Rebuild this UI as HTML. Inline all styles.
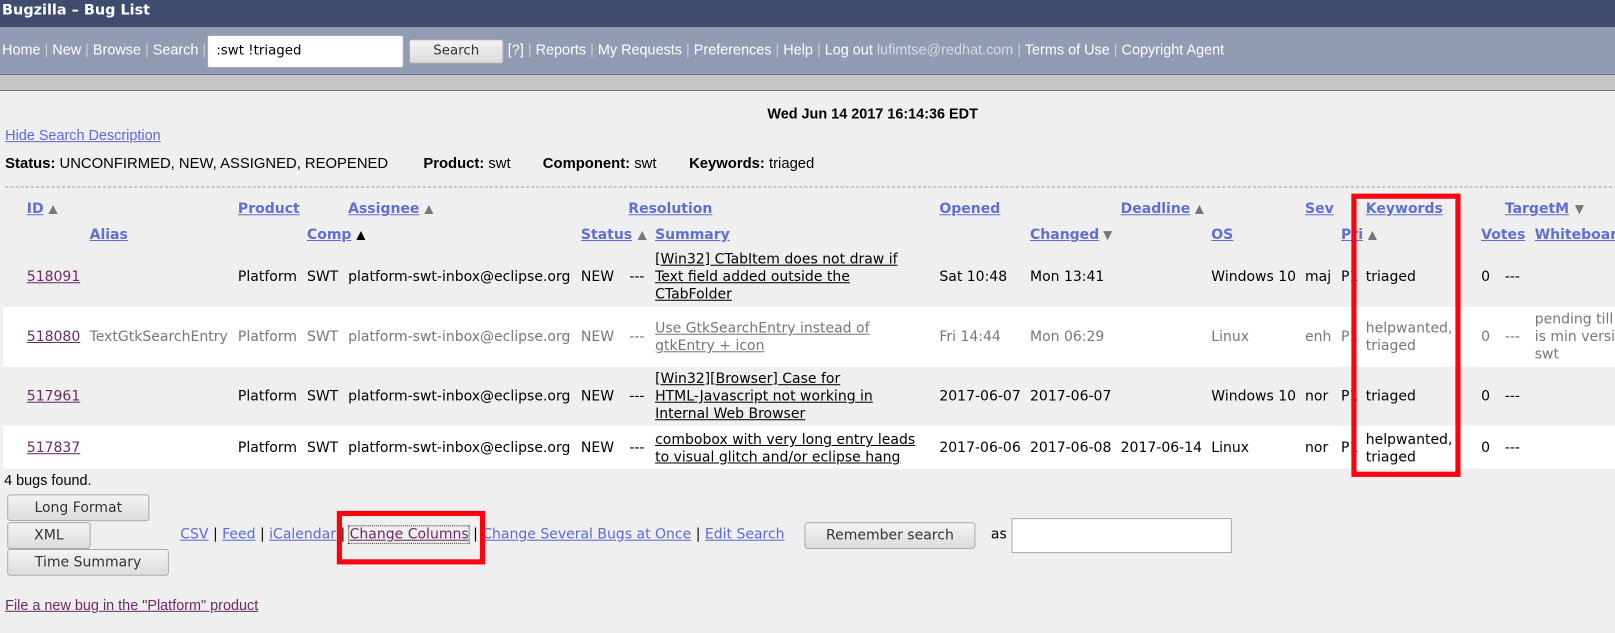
<!DOCTYPE html>
<html><head><meta charset="utf-8">
<style>
body{margin:0;width:1615px;height:633px;background:#efefef;position:relative;overflow:hidden;font-family:"Liberation Sans",sans-serif;}
#w{position:absolute;left:0;top:0;width:1568px;height:615px;transform:scale(1.03);transform-origin:0 0;}
.t{position:absolute;white-space:nowrap;line-height:17px;}
.d,.c{font-family:"DejaVu Sans",sans-serif;font-size:13.6px;color:#000;}
.g{color:#777;}
.h{font-family:"DejaVu Sans",sans-serif;font-size:13.6px;font-weight:bold;color:#6070d0;text-decoration:underline;}
.ar{color:#777;font-size:15px;text-decoration:none;}
.ab{color:#000;font-size:15px;text-decoration:none;}
.u{text-decoration:underline;}
.v{color:#6b2a63;text-decoration:underline;}
.lk{color:#5c6ad6;text-decoration:underline;}
.nav{font-size:14px;color:#fff;}
.sep{color:#c8ccda;}
.btn{position:absolute;background:linear-gradient(#f4f4f4,#dcdcdc);border:1px solid #aaa;border-radius:3px;font-family:"DejaVu Sans",sans-serif;font-size:13.6px;color:#333;text-align:center;box-sizing:border-box;}
.row{position:absolute;left:3px;width:1580px;}
.red{position:absolute;border:5px solid #ff0010;box-sizing:border-box;}
</style></head><body>
<div style="position:absolute;left:0;top:0;width:1615px;height:27px;background:#3f4c6e;"></div>
<div style="position:absolute;left:0;top:27px;width:1615px;height:47px;background:#939bb4;border-bottom:1px solid #6b7790;"></div>
<div style="position:absolute;left:0;top:75px;width:1615px;height:15px;background:#c6c6c6;border-bottom:1px solid #6b7790;"></div>
<div id="w">
<div class="t" style="left:2px;top:2px;color:#fff;font-weight:bold;font-size:14px;font-family:'DejaVu Sans',sans-serif;">Bugzilla – Bug List</div>
<div class="t nav" style="left:2px;top:40px;">Home <span class="sep">|</span> New <span class="sep">|</span> Browse <span class="sep">|</span> Search <span class="sep">|</span></div>
<div style="position:absolute;left:201px;top:34px;width:191px;height:32px;background:#fff;border:1px solid #aaa;border-radius:2px;box-sizing:border-box;"></div>
<div class="t d" style="left:210px;top:41px;font-size:13px;">:swt !triaged</div>
<div class="btn" style="left:397px;top:38px;width:92px;height:24px;line-height:22px;font-size:13px;">Search</div>
<div class="t nav" style="left:493px;top:40px;">[?] <span class="sep">|</span> Reports <span class="sep">|</span> My Requests <span class="sep">|</span> Preferences <span class="sep">|</span> Help <span class="sep">|</span> Log out <span style="color:#d6d9e4">lufimtse@redhat.com</span> <span class="sep">|</span> Terms of Use <span class="sep">|</span> Copyright Agent</div>

<div class="t" style="left:745px;top:102px;font-weight:bold;font-size:14px;">Wed Jun 14 2017 16:14:36 EDT</div>
<div class="t lk" style="left:5px;top:123px;font-size:14px;">Hide Search Description</div>
<div class="t" style="left:5px;top:151px;font-size:14.4px;"><b>Status:</b> UNCONFIRMED, NEW, ASSIGNED, REOPENED</div>
<div class="t" style="left:411px;top:151px;font-size:14.4px;"><b>Product:</b> swt</div>
<div class="t" style="left:527px;top:151px;font-size:14.4px;"><b>Component:</b> swt</div>
<div class="t" style="left:669px;top:151px;font-size:14.4px;"><b>Keywords:</b> triaged</div>
<div style="position:absolute;left:5px;top:181px;width:1570px;border-top:1px dashed #aaa;"></div>

<div class="t h" style="left:26px;top:195px;">ID</div><div class="t ar" style="left:44px;top:195px;">▲</div>
<div class="t h" style="left:231px;top:195px;">Product</div>
<div class="t h" style="left:338px;top:195px;">Assignee</div><div class="t ar" style="left:409px;top:195px;">▲</div>
<div class="t h" style="left:610px;top:195px;">Resolution</div>
<div class="t h" style="left:912px;top:195px;">Opened</div>
<div class="t h" style="left:1088px;top:195px;">Deadline</div><div class="t ar" style="left:1157px;top:195px;">▲</div>
<div class="t h" style="left:1267px;top:195px;">Sev</div>
<div class="t h" style="left:1326px;top:195px;">Keywords</div>
<div class="t h" style="left:1461px;top:195px;">TargetM</div><div class="t ar" style="left:1526px;top:195px;">▼</div>
<div class="t h" style="left:87px;top:220px;">Alias</div>
<div class="t h" style="left:298px;top:220px;">Comp</div><div class="t ab" style="left:343px;top:220px;">▲</div>
<div class="t h" style="left:564px;top:220px;">Status</div><div class="t ar" style="left:616px;top:220px;">▲</div>
<div class="t h" style="left:636px;top:220px;">Summary</div>
<div class="t h" style="left:1000px;top:220px;">Changed</div><div class="t ar" style="left:1068px;top:220px;">▼</div>
<div class="t h" style="left:1176px;top:220px;">OS</div>
<div class="t h" style="left:1302px;top:220px;">Pri</div><div class="t ar" style="left:1325px;top:220px;">▲</div>
<div class="t h" style="left:1438px;top:220px;">Votes</div>
<div class="t h" style="left:1490px;top:220px;">Whiteboard</div>

<div class="row" style="top:240px;height:58px;background:#efefef;"></div>
<div class="row" style="top:298px;height:58px;background:#fff;"></div>
<div class="row" style="top:356px;height:57px;background:#efefef;"></div>
<div class="row" style="top:413px;height:42px;background:#fff;"></div>

<div class="t c v" style="left:26px;top:261px;">518091</div>
<div class="t c" style="left:231px;top:261px;">Platform</div>
<div class="t c" style="left:298px;top:261px;">SWT</div>
<div class="t c" style="left:338px;top:261px;">platform-swt-inbox@eclipse.org</div>
<div class="t c" style="left:564px;top:261px;">NEW</div>
<div class="t c" style="left:611px;top:261px;">---</div>
<div class="t c u" style="left:636px;top:244px;">[Win32] CTabItem does not draw if<br>Text field added outside the<br>CTabFolder</div>
<div class="t d" style="left:912px;top:261px;">Sat 10:48</div>
<div class="t d" style="left:1000px;top:261px;">Mon 13:41</div>
<div class="t d" style="left:1176px;top:261px;">Windows 10</div>
<div class="t d" style="left:1267px;top:261px;">maj</div>
<div class="t d" style="left:1302px;top:261px;">P1</div>
<div class="t d" style="left:1326px;top:261px;">triaged</div>
<div class="t d" style="left:1438px;top:261px;">0</div>
<div class="t d" style="left:1461px;top:261px;">---</div>

<div class="t c v" style="left:26px;top:319px;">518080</div>
<div class="t c g" style="left:87px;top:319px;">TextGtkSearchEntry</div>
<div class="t c g" style="left:231px;top:319px;">Platform</div>
<div class="t c g" style="left:298px;top:319px;">SWT</div>
<div class="t c g" style="left:338px;top:319px;">platform-swt-inbox@eclipse.org</div>
<div class="t c g" style="left:564px;top:319px;">NEW</div>
<div class="t c g" style="left:611px;top:319px;">---</div>
<div class="t c g u" style="left:636px;top:311px;">Use GtkSearchEntry instead of<br>gtkEntry + icon</div>
<div class="t d g" style="left:912px;top:319px;">Fri 14:44</div>
<div class="t d g" style="left:1000px;top:319px;">Mon 06:29</div>
<div class="t d g" style="left:1176px;top:319px;">Linux</div>
<div class="t d g" style="left:1267px;top:319px;">enh</div>
<div class="t d g" style="left:1302px;top:319px;">P1</div>
<div class="t d g" style="left:1326px;top:311px;">helpwanted,<br>triaged</div>
<div class="t d g" style="left:1438px;top:319px;">0</div>
<div class="t d g" style="left:1461px;top:319px;">---</div>
<div class="t d g" style="left:1490px;top:302px;">pending till<br>is min versi<br>swt</div>

<div class="t c v" style="left:26px;top:377px;">517961</div>
<div class="t c" style="left:231px;top:377px;">Platform</div>
<div class="t c" style="left:298px;top:377px;">SWT</div>
<div class="t c" style="left:338px;top:377px;">platform-swt-inbox@eclipse.org</div>
<div class="t c" style="left:564px;top:377px;">NEW</div>
<div class="t c" style="left:611px;top:377px;">---</div>
<div class="t c u" style="left:636px;top:360px;">[Win32][Browser] Case for<br>HTML-Javascript not working in<br>Internal Web Browser</div>
<div class="t d" style="left:912px;top:377px;">2017-06-07</div>
<div class="t d" style="left:1000px;top:377px;">2017-06-07</div>
<div class="t d" style="left:1176px;top:377px;">Windows 10</div>
<div class="t d" style="left:1267px;top:377px;">nor</div>
<div class="t d" style="left:1302px;top:377px;">P1</div>
<div class="t d" style="left:1326px;top:377px;">triaged</div>
<div class="t d" style="left:1438px;top:377px;">0</div>
<div class="t d" style="left:1461px;top:377px;">---</div>

<div class="t c v" style="left:26px;top:427px;">517837</div>
<div class="t c" style="left:231px;top:427px;">Platform</div>
<div class="t c" style="left:298px;top:427px;">SWT</div>
<div class="t c" style="left:338px;top:427px;">platform-swt-inbox@eclipse.org</div>
<div class="t c" style="left:564px;top:427px;">NEW</div>
<div class="t c" style="left:611px;top:427px;">---</div>
<div class="t c u" style="left:636px;top:419px;">combobox with very long entry leads<br>to visual glitch and/or eclipse hang</div>
<div class="t d" style="left:912px;top:427px;">2017-06-06</div>
<div class="t d" style="left:1000px;top:427px;">2017-06-08</div>
<div class="t d" style="left:1088px;top:427px;">2017-06-14</div>
<div class="t d" style="left:1176px;top:427px;">Linux</div>
<div class="t d" style="left:1267px;top:427px;">nor</div>
<div class="t d" style="left:1302px;top:427px;">P1</div>
<div class="t d" style="left:1326px;top:419px;">helpwanted,<br>triaged</div>
<div class="t d" style="left:1438px;top:427px;">0</div>
<div class="t d" style="left:1461px;top:427px;">---</div>

<div class="red" style="left:1312px;top:188px;width:106px;height:275px;"></div>

<div class="t" style="left:4px;top:458px;font-size:14px;">4 bugs found.</div>
<div class="btn" style="left:7px;top:480px;width:138px;height:26px;line-height:24px;">Long Format</div>
<div class="btn" style="left:7px;top:507px;width:81px;height:26px;line-height:24px;">XML</div>
<div class="btn" style="left:7px;top:533px;width:157px;height:26px;line-height:24px;">Time Summary</div>
<div class="t c" style="left:175px;top:511px;"><span class="lk">CSV</span> | <span class="lk">Feed</span> | <span class="lk">iCalendar</span> | <span class="v" style="outline:1px dotted #333;">Change Columns</span> | <span class="lk">Change Several Bugs at Once</span> | <span class="lk">Edit Search</span></div>
<div class="red" style="left:327px;top:496px;width:144px;height:52px;"></div>
<div class="btn" style="left:781px;top:507px;width:166px;height:26px;line-height:24px;">Remember search</div>
<div class="t d" style="left:962px;top:511px;">as</div>
<div style="position:absolute;left:982px;top:503px;width:214px;height:34px;background:#fff;border:1px solid #aaa;box-sizing:border-box;"></div>
<div class="t v" style="left:5px;top:579px;font-size:14px;">File a new bug in the "Platform" product</div>
</div>
</body></html>
